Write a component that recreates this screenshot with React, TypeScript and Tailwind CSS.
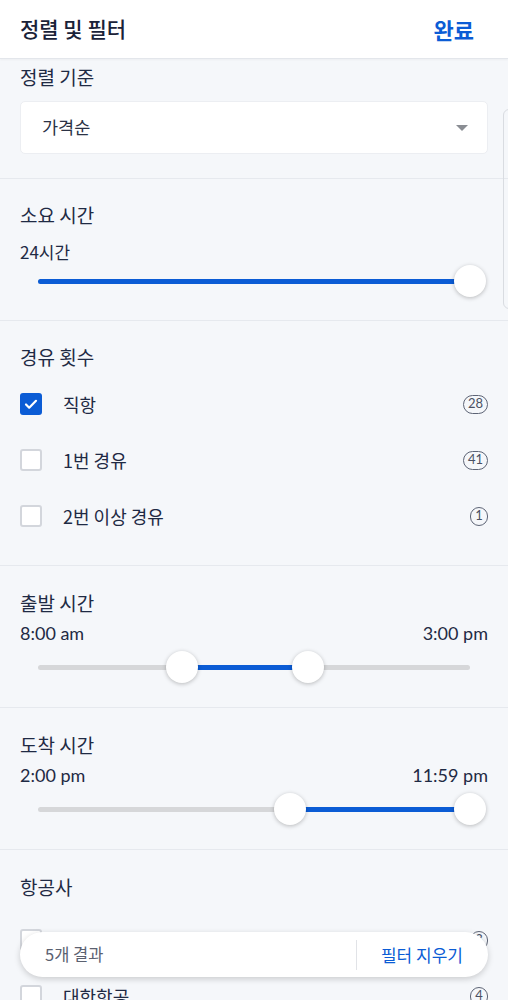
import React from "react";

const FONT = { fontFamily: '"Noto Sans CJK KR", "Noto Sans", sans-serif' };
const LATIN = { fontFamily: 'Lato, "Noto Sans CJK KR", sans-serif' };

type Stop = { label: string; count: string; checked?: boolean };

const STOPS: Stop[] = [
  { label: "직항", count: "28", checked: true },
  { label: "1번 경유", count: "41" },
  { label: "2번 이상 경유", count: "1" },
];

const AIRLINES: Stop[] = [
  { label: "아시아나항공", count: "3" },
  { label: "대한항공", count: "4" },
];

function Checkbox({ checked }: { checked?: boolean }) {
  if (checked) {
    return (
      <span className="flex h-[22px] w-[22px] shrink-0 items-center justify-center rounded-[3px] bg-[#0b5cd5]">
        <svg width="16" height="16" viewBox="0 0 16 16" fill="none">
          <path d="M3 8.5l3.2 3.2L13 4.8" stroke="white" strokeWidth="2.2" strokeLinecap="round" strokeLinejoin="round" />
        </svg>
      </span>
    );
  }
  return <span className="h-[22px] w-[22px] shrink-0 rounded-[3px] border-2 border-[#d3d6dc] bg-white" />;
}

function Badge({ n }: { n: string }) {
  return (
    <span
      className="flex h-[19px] min-w-[18px] items-center justify-center rounded-full border border-[#5d6475] px-[4px] text-[13px] text-[#4a5163]"
      style={LATIN}
    >
      {n}
    </span>
  );
}

function CheckRow({ item }: { item: Stop }) {
  return (
    <div className="flex h-[56px] items-center">
      <Checkbox checked={item.checked} />
      <span className="ml-[21px] flex-1 text-[18px] text-[#1f2a44]">{item.label}</span>
      <Badge n={item.count} />
    </div>
  );
}

function Slider({ from, to }: { from: number; to: number }) {
  return (
    <div className="relative mx-[18px] h-[32px]">
      <div className="absolute left-0 right-0 top-[14px] h-[5px] rounded-full bg-[#d6d7d9]" />
      <div
        className="absolute top-[14px] h-[5px] rounded-full bg-[#0b5cd5]"
        style={{ left: `${from}%`, right: `${100 - to}%` }}
      />
      {from > 0 && (
        <div
          className="absolute top-0 h-[32px] w-[32px] -translate-x-1/2 rounded-full bg-white shadow-[0_1px_4px_rgba(0,0,0,0.25)]"
          style={{ left: `${from}%` }}
        />
      )}
      <div
        className="absolute top-0 h-[32px] w-[32px] -translate-x-1/2 rounded-full bg-white shadow-[0_1px_4px_rgba(0,0,0,0.25)]"
        style={{ left: `${to}%` }}
      />
    </div>
  );
}

function Heading({ children }: { children: React.ReactNode }) {
  return <h2 className="text-[19px] leading-[24px] text-[#1f2a44]">{children}</h2>;
}

function TimeRange({ title, start, end, from, to }: { title: string; start: string; end: string; from: number; to: number }) {
  return (
    <section className="border-b border-[#e6e9ee] px-[20px] pb-[24px] pt-[25px]">
      <Heading>{title}</Heading>
      <div className="mt-[7px] flex justify-between text-[18px] leading-[22px] text-[#1f2a44]" style={LATIN}>
        <span>{start}</span>
        <span>{end}</span>
      </div>
      <div className="mt-[7px]">
        <Slider from={from} to={to} />
      </div>
    </section>
  );
}

export default function App() {
  return (
    <div className="relative h-[1000px] w-[508px] overflow-hidden bg-[#f5f7fa]" style={FONT}>
      <header className="flex h-[59px] items-center justify-between border-b border-[#e3e6eb] bg-white px-[20px] shadow-[0_1px_2px_rgba(0,0,0,0.04)]">
        <h1 className="text-[21px] font-medium text-[#1a2238]">정렬 및 필터</h1>
        <button className="mr-[14px] text-[22px] font-bold text-[#0b5cd5]">완료</button>
      </header>

      <section className="border-b border-[#e6e9ee] px-[20px] pb-[24px] pt-[6px]">
        <Heading>정렬 기준</Heading>
        <div className="mt-[12px] flex h-[53px] items-center justify-between rounded-[5px] border border-[#eceef2] bg-white pl-[21px] pr-[18px]">
          <span className="text-[17.5px] text-[#2b3245]">가격순</span>
          <svg width="14" height="8" viewBox="0 0 14 8">
            <path d="M1 1h12L7 7z" fill="#8a8d93" />
          </svg>
        </div>
      </section>

      <section className="border-b border-[#e6e9ee] px-[20px] pb-[23px] pt-[24px]">
        <Heading>소요 시간</Heading>
        <div className="mt-[14px] text-[17px] leading-[22px] text-[#1f2a44]">24시간</div>
        <div className="mt-[2px]">
          <Slider from={0} to={100} />
        </div>
      </section>

      <section className="border-b border-[#e6e9ee] px-[20px] pb-[21px] pt-[24px]">
        <Heading>경유 횟수</Heading>
        <div className="mt-[7px]">
          {STOPS.map((s) => (
            <CheckRow key={s.label} item={s} />
          ))}
        </div>
      </section>

      <TimeRange title="출발 시간" start="8:00 am" end="3:00 pm" from={33.3} to={62.5} />
      <TimeRange title="도착 시간" start="2:00 pm" end="11:59 pm" from={58.3} to={100} />

      <section className="px-[20px] pt-[25px]">
        <Heading>항공사</Heading>
        <div className="mt-[13px]">
          {AIRLINES.map((s) => (
            <CheckRow key={s.label} item={s} />
          ))}
        </div>
      </section>

      <div className="pointer-events-none absolute left-[503px] top-[109px] h-[200px] w-[20px] rounded-[6px] border border-[#d9dce1]" />

      <div className="absolute left-[20px] top-[932px] flex h-[45px] w-[468px] items-center rounded-full bg-white shadow-[0_2px_6px_rgba(0,0,0,0.18)]">
        <span className="flex-1 pl-[25px] text-[16.5px] text-[#5b6170]">5개 결과</span>
        <span className="h-[30px] w-px bg-[#e1e3e7]" />
        <button className="pl-[24px] pr-[25px] text-[17px] text-[#0b5cd5]">필터 지우기</button>
      </div>
    </div>
  );
}
